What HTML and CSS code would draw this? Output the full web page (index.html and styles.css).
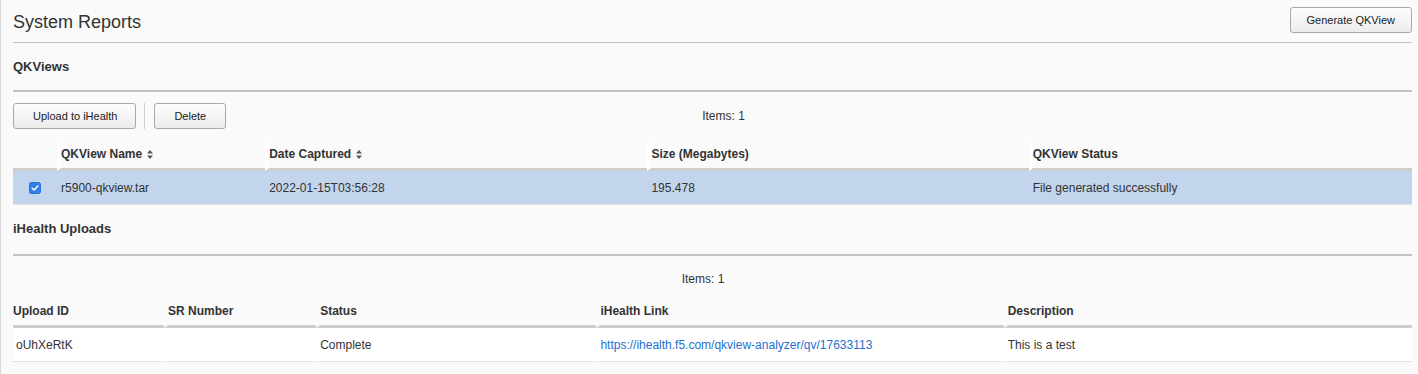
FILE: index.html
```html
<html>
<head>
<meta charset="utf-8">
<title>System Reports</title>
<link rel="stylesheet" href="styles.css">
</head>

<body>

<div class="page">

<div class="page-head">
<h1 class="page-title">System Reports</h1>
<button class="btn btn-generate" type="button">Generate QKView</button>
</div>

<section class="panel panel-qkviews">
<h2 class="panel-title">QKViews</h2>

<div class="toolbar">
<div class="toolbar-actions">
<button class="btn" type="button">Upload to iHealth</button>
<span class="toolbar-sep"></span>
<button class="btn btn-delete" type="button">Delete</button>
</div>
<div class="items-count items-count-toolbar">Items: 1</div>
</div>

<table class="grid grid-light">
<thead>
<tr>
<th class="col-check"></th>
<th class="col-name">QKView Name <svg class="sort-icon" width="6" height="9" viewBox="0 0 6 9"><path d="M3 0L6 3.6H0z M3 9L0 5.4H6z"/></svg></th>
<th class="col-date">Date Captured <svg class="sort-icon" width="6" height="9" viewBox="0 0 6 9"><path d="M3 0L6 3.6H0z M3 9L0 5.4H6z"/></svg></th>
<th class="col-size">Size (Megabytes)</th>
<th class="col-status">QKView Status</th>
</tr>
</thead>
<tbody>
<tr class="is-selected">
<td class="cell-check">
<svg class="checkbox" width="12" height="12" viewBox="0 0 12 12"><rect x="0.5" y="0.5" width="11" height="11" rx="2" fill="#2f80ed" stroke="#2a6fd0"/><path d="M3.2 6.2L5.1 8L8.9 4" fill="none" stroke="#fff" stroke-width="1.5" stroke-linecap="round" stroke-linejoin="round"/></svg>
</td>
<td>r5900-qkview.tar</td>
<td>2022-01-15T03:56:28</td>
<td>195.478</td>
<td>File generated successfully</td>
</tr>
</tbody>
</table>
</section>

<section class="panel panel-uploads">
<h2 class="panel-title">iHealth Uploads</h2>

<div class="items-count items-count-block">Items: 1</div>

<table class="grid grid-uploads">
<thead>
<tr>
<th class="col-id">Upload ID</th>
<th class="col-sr">SR Number</th>
<th class="col-upstatus">Status</th>
<th class="col-link">iHealth Link</th>
<th class="col-desc">Description</th>
</tr>
</thead>
<tbody>
<tr>
<td class="cell-id">oUhXeRtK</td>
<td></td>
<td>Complete</td>
<td><a class="link" href="#">https://ihealth.f5.com/qkview-analyzer/qv/17633113</a></td>
<td>This is a test</td>
</tr>
</tbody>
</table>
</section>

</div>

</body>
</html>
```

FILE: styles.css
```css
* {
  margin: 0;
  padding: 0;
}

html, body {
  background-color: #fafafa;
}

body {
  font-family: "Liberation Sans", Arial, Helvetica, sans-serif;
  font-size: 12px;
  line-height: 16px;
  color: #333;
}

table {
  font-size: inherit;
  line-height: inherit;
  color: inherit;
}

.page {
  min-height: 374px;
  border-left: 1px solid #d6d6d6;
  padding: 0 6px 0 12px;
}

/* header */

.page-head {
  display: flex;
  justify-content: space-between;
  align-items: flex-start;
  height: 35px;
  padding-top: 7px;
  border-bottom: 1px solid #c2c2c2;
}

.page-title {
  font-size: 18px;
  font-weight: normal;
  line-height: 26px;
  margin-top: 2px;
  color: #333;
}

.btn {
  height: 26px;
  padding: 0 18px 0 19px;
  font-family: "Liberation Sans", Arial, Helvetica, sans-serif;
  font-size: 11px;
  color: #222;
  background: linear-gradient(#fdfdfd, #ececec);
  border: 1px solid #a9a9a9;
  border-radius: 3px;
  cursor: pointer;
}

.btn-generate {
  padding: 0 16px;
}

.btn-delete {
  padding: 0 19px;
}

/* panels */

.panel-title {
  font-size: 13px;
  font-weight: bold;
  line-height: 16px;
  padding: 16px 0 15px;
  border-bottom: 2px solid #c2c2c2;
  color: #333;
}

.panel-uploads .panel-title {
  padding-bottom: 17px;
}

.toolbar {
  display: grid;
  grid-template-columns: 1fr auto 1fr;
  align-items: center;
  margin-top: 11px;
}

.toolbar-actions {
  display: flex;
  align-items: stretch;
  gap: 8px;
}

.toolbar-sep {
  width: 1px;
  margin-right: 1px;
  background-color: #cfcfcf;
}

.items-count {
  text-align: center;
}

.items-count-toolbar {
  padding-left: 22px;
}

.items-count-block {
  margin-top: 15px;
  padding-right: 19px;
}

/* tables */

.grid {
  width: 100%;
  table-layout: fixed;
  border-collapse: separate;
  border-spacing: 0;
  margin-top: 13px;
}

.grid-uploads {
  margin-top: 12px;
}

.grid th, .grid td {
  box-sizing: border-box;
  text-align: left;
  white-space: nowrap;
  overflow: hidden;
}

.grid th {
  font-weight: bold;
  padding: 4px 0 6px;
  border-bottom: 3px solid #cdcdcd;
}

.grid th + th {
  border-left: 4px solid #fafafa;
}

.grid-light th + th {
  border-left-color: #fff;
}

.grid td {
  padding: 9px 0 8px;
  border-bottom: 1px solid #e2e2e2;
  background-color: #fff;
}

.grid td + td {
  border-left: 4px solid transparent;
}

.is-selected td {
  background-color: #c2d5ed;
  border-bottom-color: #e4e8ee;
}

.cell-check {
  text-align: center !important;
}

.checkbox {
  display: inline-block;
  vertical-align: -2px;
}

.sort-icon {
  fill: #555;
  margin-left: 1px;
  vertical-align: -1px;
}

.col-check { width: 44px; }
.col-name { width: 208px; }
.col-date { width: 382px; }
.col-size { width: 381px; }
.col-status { width: 383px; }

.col-id { width: 151px; }
.col-sr { width: 152px; }
.col-upstatus { width: 280px; }
.col-link { width: 407px; }
.col-desc { width: 408px; }

.cell-id {
  padding-left: 3px !important;
}

.link {
  color: #1f6fd1;
  text-decoration: none;
}
```
